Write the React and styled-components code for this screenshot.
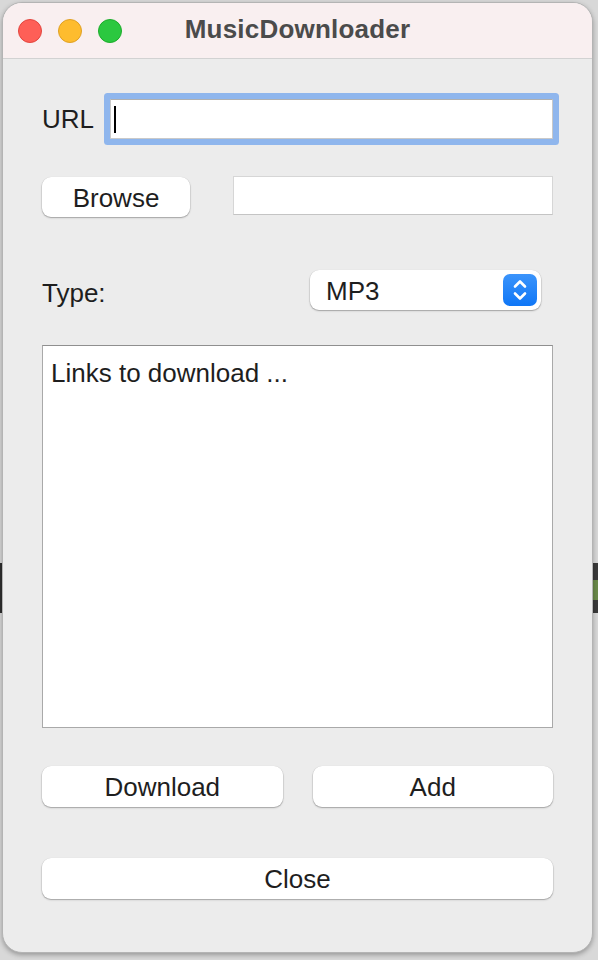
import React from "react";
import styled, { createGlobalStyle } from "styled-components";

const Global = createGlobalStyle`
  html, body { margin: 0; padding: 0; }
  body {
    width: 598px;
    height: 960px;
    overflow: hidden;
    font-family: "Liberation Sans", Arial, sans-serif;
    background-color: #d8d8d8;
    background-image:
      linear-gradient(to bottom, transparent 563px, #2e2e2e 563px, #2e2e2e 613px, transparent 613px),
      linear-gradient(to bottom, transparent 563px, #3a3a3a 563px, #3a3a3a 580px, #6a8a4a 580px, #6a8a4a 600px, #3a3a3a 600px, #3a3a3a 613px, transparent 613px);
    background-size: 3px 960px, 6px 960px;
    background-position: 0 0, 592px 0;
    background-repeat: no-repeat;
  }
`;

const Window = styled.div`
  margin: 2px 0 0 2px;
  width: 591px;
  height: 951px;
  box-sizing: border-box;
  border: 1px solid #b4b4b4;
  border-radius: 20px;
  background: #ececec;
  overflow: hidden;
  display: flex;
  flex-direction: column;
  box-shadow: 0 2px 5px rgba(0, 0, 0, 0.3);
`;

const TitleBar = styled.div`
  height: 55px;
  flex: none;
  background: #f9eff0;
  border-bottom: 1px solid #d2d2d2;
  display: grid;
  grid-template-columns: 1fr auto 1fr;
  align-items: center;
  padding: 0 15px;
`;

const Lights = styled.div`
  display: flex;
  gap: 16px;
  align-items: center;
`;

const Light = styled.span`
  width: 24px;
  height: 24px;
  box-sizing: border-box;
  border-radius: 50%;
  background: ${(p) => p.$bg};
  border: 1px solid ${(p) => p.$edge};
`;

const Title = styled.div`
  font-size: 26px;
  font-weight: 700;
  color: #4b4b4b;
  letter-spacing: 0.2px;
  margin-top: -2px;
`;

const Body = styled.div`
  flex: 1;
  display: flex;
  flex-direction: column;
  padding: 0 39px 0 39px;
  color: #1e1e1e;
  font-size: 26px;
`;

const Row = styled.div`
  display: flex;
  align-items: ${(p) => p.$align || "center"};
  margin-top: ${(p) => p.$top}px;
`;

const Label = styled.span`
  font-size: 26px;
  color: #1e1e1e;
  margin-top: ${(p) => p.$shift || 0}px;
`;

const UrlField = styled.div`
  margin-left: 16px;
  flex: 1;
  height: 40px;
  box-sizing: border-box;
  background: #fff;
  border: 1px solid #c9c9c9;
  border-top-color: #b0b0b0;
  box-shadow: 0 0 0 6px #8fb6ed;
  border-radius: 1px;
  display: flex;
  align-items: center;
  padding-left: 3px;
`;

const Caret = styled.span`
  width: 2px;
  height: 27px;
  background: #000;
`;

const Button = styled.div`
  height: ${(p) => p.$h || 40}px;
  width: ${(p) => (p.$w ? `${p.$w}px` : "auto")};
  flex: ${(p) => (p.$grow ? 1 : "none")};
  box-sizing: border-box;
  background: #fff;
  border-radius: 9px;
  box-shadow: 0 0.5px 0 0.5px rgba(0, 0, 0, 0.12), 0 1px 2px rgba(0, 0, 0, 0.22);
  display: flex;
  align-items: center;
  justify-content: center;
  padding-top: 2px;
  font-size: 26px;
  color: #1e1e1e;
`;

const PathField = styled.div`
  margin-left: 43px;
  flex: 1;
  height: 39px;
  margin-top: -1px;
  box-sizing: border-box;
  background: #fff;
  border: 1px solid #d6d6d6;
  border-bottom-color: #c4c4c4;
`;

const TypeRow = styled.div`
  display: grid;
  grid-template-columns: 268px 231px;
  align-items: center;
  margin-top: 53px;
`;

const Select = styled.div`
  height: 40px;
  box-sizing: border-box;
  background: #fff;
  border-radius: 9px;
  box-shadow: 0 0.5px 0 0.5px rgba(0, 0, 0, 0.12), 0 1px 2px rgba(0, 0, 0, 0.22);
  display: flex;
  align-items: center;
  justify-content: space-between;
  padding: 0 4px 0 16px;
  font-size: 26px;
  color: #1e1e1e;
`;

const SelectText = styled.span`
  margin-top: 3px;
`;

const Stepper = styled.div`
  width: 34px;
  height: 32px;
  border-radius: 7px;
  background: linear-gradient(to bottom, #3b94fb, #0f76f6);
  display: flex;
  align-items: center;
  justify-content: center;
`;

const TextArea = styled.div`
  margin-top: 35px;
  height: 383px;
  box-sizing: border-box;
  background: #fff;
  border: 1px solid #a9a9a9;
  border-top-color: #8f8f8f;
  padding: 12px 8px;
  font-size: 26px;
  line-height: 30px;
  color: #1e1e1e;
`;

const ButtonRow = styled.div`
  display: flex;
  gap: 30px;
  margin-top: ${(p) => p.$top}px;
`;

export default function App() {
  return (
    <>
      <Global />
      <Window>
        <TitleBar>
          <Lights>
            <Light $bg="#fe5f57" $edge="#e2463f" />
            <Light $bg="#febc2e" $edge="#dfa024" />
            <Light $bg="#2bc840" $edge="#1dac2b" />
          </Lights>
          <Title>MusicDownloader</Title>
          <span />
        </TitleBar>
        <Body>
          <Row $top={40}>
            <Label $shift={1}>URL</Label>
            <UrlField>
              <Caret />
            </UrlField>
          </Row>
          <Row $top={38} $align="flex-start">
            <Button $w={148}>Browse</Button>
            <PathField />
          </Row>
          <TypeRow>
            <Label $shift={7}>Type:</Label>
            <Select>
              <SelectText>MP3</SelectText>
              <Stepper>
                <svg width="20" height="26" viewBox="0 0 20 26" fill="none">
                  <path d="M5 9.5 L10 4.5 L15 9.5" stroke="#fff" strokeWidth="2.6" strokeLinecap="round" strokeLinejoin="round" />
                  <path d="M5 16.5 L10 21.5 L15 16.5" stroke="#fff" strokeWidth="2.6" strokeLinecap="round" strokeLinejoin="round" />
                </svg>
              </Stepper>
            </Select>
          </TypeRow>
          <TextArea>Links to download ...</TextArea>
          <ButtonRow $top={38}>
            <Button $grow $h={41}>Download</Button>
            <Button $grow $h={41}>Add</Button>
          </ButtonRow>
          <ButtonRow $top={51}>
            <Button $grow $h={41}>Close</Button>
          </ButtonRow>
        </Body>
      </Window>
    </>
  );
}
